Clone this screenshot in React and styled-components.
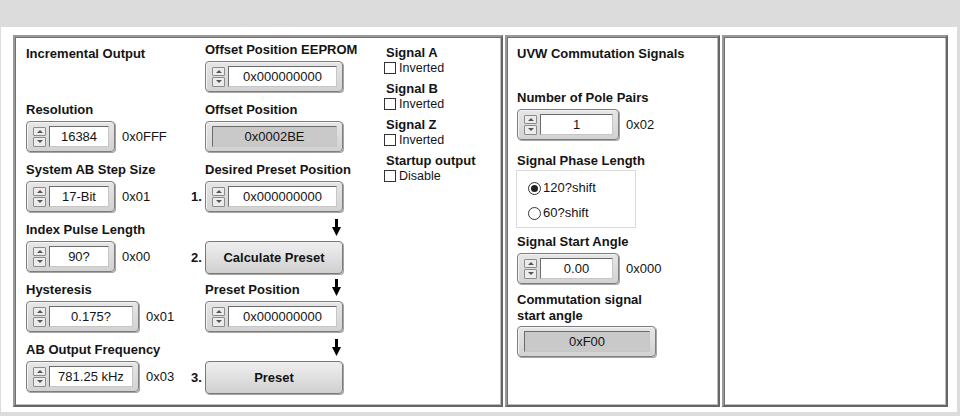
import React from 'react'
import styled, { createGlobalStyle } from 'styled-components'

const GlobalStyle = createGlobalStyle`
  body {
    margin: 0;
    background: #dcdcdc;
    font-family: "Liberation Sans", Arial, sans-serif;
    color: #141414;
  }
`

const Page = styled.div`
  padding: 27px 0 0 1px;
`

const Sheet = styled.div`
  width: 956px;
  height: 385px;
  box-sizing: border-box;
  background: #fff;
  padding: 8px 0 5px 12px;
  display: flex;
  gap: 2px;
`

const Panel = styled.section`
  width: ${(p) => p.$w}px;
  box-sizing: border-box;
  border: 2px solid;
  border-color: #9a9a9a #666 #666 #9a9a9a;
  box-shadow: inset 1px 1px 0 #707070, inset -1px -1px 0 #bdbdbd;
  padding: ${(p) => p.$pad || '5px 0 0 11px'};
`

const MainGrid = styled.div`
  display: grid;
  grid-template-columns: 165px 193px 1fr;
`

const Column = styled.div`
  display: flex;
  flex-direction: column;
  padding-top: ${(p) => p.$pt || 0}px;
`

const Group = styled.div`
  height: 60px;
  display: flex;
  flex-direction: column;
`

const Title = styled.div`
  font-size: 13px;
  font-weight: bold;
  line-height: 16px;
  margin-top: ${(p) => p.$mt || 0}px;
`

const Label = styled.div`
  font-size: 13px;
  font-weight: bold;
  line-height: 16px;
  height: 16px;
  white-space: nowrap;
  margin-top: ${(p) => p.$mt || 0}px;
  margin-bottom: ${(p) => (p.$mb === undefined ? 3 : p.$mb)}px;
`

const LabelLine = styled.div`
  display: flex;
  justify-content: space-between;
  width: 152px;
  height: 16px;
  margin-bottom: 3px;
  padding-left: 14px;
  box-sizing: border-box;
  font-size: 13px;
  font-weight: bold;
  line-height: 16px;
  white-space: nowrap;
`

const Arrow = styled.svg`
  width: 9px;
  height: 17px;
  margin-top: -3px;
  margin-right: 2px;
`

const Row = styled.div`
  display: flex;
  align-items: center;
  gap: 7px;
  margin-top: ${(p) => p.$mt || 0}px;
`

const Marker = styled.span`
  width: 14px;
  font-size: 13px;
  font-weight: bold;
  margin-right: -7px;
`

const Hex = styled.span`
  font-size: 13px;
`

const Frame = styled.div`
  width: ${(p) => p.$w}px;
  height: 31px;
  box-sizing: border-box;
  display: flex;
  align-items: center;
  gap: 3px;
  padding: 0 5px 0 6px;
  border: 1px solid #7e7e7e;
  border-radius: 4px;
  background: linear-gradient(#e6e6e6, #d2d2d2);
  box-shadow: 1px 1px 0 #a6a6a6, inset 1px 1px 0 #f4f4f4;
`

const Spinner = styled.div`
  width: 13px;
  height: 20px;
  display: flex;
  flex-direction: column;
  gap: 1px;
  flex-shrink: 0;
`

const SpinButton = styled.div`
  flex: 1;
  border: 1px solid #8c8c8c;
  border-radius: 1px;
  background: #ececec;
  display: flex;
  align-items: center;
  justify-content: center;
  &::after {
    content: '';
    border-left: 3px solid transparent;
    border-right: 3px solid transparent;
    ${(p) => (p.$down ? 'border-top: 3px solid #555;' : 'border-bottom: 3px solid #555;')}
  }
`

const Field = styled.div`
  flex: 1;
  height: 21px;
  box-sizing: border-box;
  background: ${(p) => (p.$readonly ? '#c9c9c9' : '#fff')};
  border: 1px solid;
  border-color: #6c6c6c #c6c6c6 #c6c6c6 #6c6c6c;
  font-size: 13px;
  line-height: 19px;
  text-align: center;
`

const Button = styled.button`
  width: 138px;
  height: 33px;
  border: 1px solid #7a7a7a;
  border-radius: 4px;
  background: linear-gradient(#eeeeee, #e2e2e2 45%, #cfcfcf);
  box-shadow: 1px 1px 0 #a6a6a6;
  font-family: inherit;
  font-size: 13px;
  font-weight: bold;
  color: #141414;
  padding: 0;
`

const SignalGroup = styled.div`
  display: flex;
  flex-direction: column;
  height: 36px;
`

const SignalTitle = styled.div`
  font-size: 13px;
  font-weight: bold;
  line-height: 17px;
  padding-left: 2px;
`

const CheckRow = styled.label`
  display: flex;
  align-items: flex-start;
  gap: 3px;
  font-size: 12.5px;
  line-height: 15px;
`

const CheckBox = styled.span`
  width: 12px;
  height: 12px;
  box-sizing: border-box;
  border: 1px solid #333;
  background: #fff;
  margin-top: 1px;
`

const RadioBox = styled.div`
  width: 120px;
  height: 58px;
  box-sizing: border-box;
  border: 1px solid #dadada;
  margin-left: -1px;
  padding: 10px 0 0 11px;
  display: flex;
  flex-direction: column;
  gap: 11px;
`

const RadioRow = styled.div`
  display: flex;
  align-items: center;
  gap: 2px;
  font-size: 13px;
  line-height: 14px;
`

const RadioDot = styled.span`
  width: 13px;
  height: 13px;
  box-sizing: border-box;
  border-radius: 50%;
  border: 1px solid #333;
  background: #fff;
  display: flex;
  align-items: center;
  justify-content: center;
  &::after {
    content: '';
    width: 7px;
    height: 7px;
    border-radius: 50%;
    background: ${(p) => (p.$on ? '#222' : 'transparent')};
  }
`

const Numeric = ({ w, value }) => (
  <Frame $w={w}>
    <Spinner>
      <SpinButton />
      <SpinButton $down />
    </Spinner>
    <Field>{value}</Field>
  </Frame>
)

const Indicator = ({ w, value }) => (
  <Frame $w={w}>
    <Field $readonly>{value}</Field>
  </Frame>
)

const DownArrow = () => (
  <Arrow viewBox="0 0 9 17">
    <rect x="3" y="0" width="3" height="9" fill="#000" />
    <polygon points="0,8 9,8 4.5,17" fill="#000" />
  </Arrow>
)

const incremental = [
  { label: 'Resolution', value: '16384', hex: '0x0FFF', w: 89 },
  { label: 'System AB Step Size', value: '17-Bit', hex: '0x01', w: 89 },
  { label: 'Index Pulse Length', value: '90?', hex: '0x00', w: 89 },
  { label: 'Hysteresis', value: '0.175?', hex: '0x01', w: 113 },
  { label: 'AB Output Frequency', value: '781.25 kHz', hex: '0x03', w: 113 },
]

const signals = [
  { title: 'Signal A', text: 'Inverted' },
  { title: 'Signal B', text: 'Inverted' },
  { title: 'Signal Z', text: 'Inverted' },
  { title: 'Startup output', text: 'Disable' },
]

export default function App() {
  return (
    <Page>
      <GlobalStyle />
      <Sheet>
        <Panel $w={490}>
          <MainGrid>
            <Column>
              <Group>
                <Title $mt={4}>Incremental Output</Title>
              </Group>
              {incremental.map((item) => (
                <Group key={item.label}>
                  <Label>{item.label}</Label>
                  <Row>
                    <Numeric w={item.w} value={item.value} />
                    <Hex>{item.hex}</Hex>
                  </Row>
                </Group>
              ))}
            </Column>

            <Column>
              <Group>
                <LabelLine>Offset Position EEPROM</LabelLine>
                <Row>
                  <Marker />
                  <Numeric w={138} value="0x000000000" />
                </Row>
              </Group>
              <Group>
                <LabelLine>Offset Position</LabelLine>
                <Row>
                  <Marker />
                  <Indicator w={138} value="0x0002BE" />
                </Row>
              </Group>
              <Group>
                <LabelLine>Desired Preset Position</LabelLine>
                <Row>
                  <Marker>1.</Marker>
                  <Numeric w={138} value="0x000000000" />
                </Row>
              </Group>
              <Group>
                <LabelLine>
                  <span />
                  <DownArrow />
                </LabelLine>
                <Row>
                  <Marker>2.</Marker>
                  <Button>Calculate Preset</Button>
                </Row>
              </Group>
              <Group>
                <LabelLine>
                  <span>Preset Position</span>
                  <DownArrow />
                </LabelLine>
                <Row>
                  <Marker />
                  <Numeric w={138} value="0x000000000" />
                </Row>
              </Group>
              <Group>
                <LabelLine>
                  <span />
                  <DownArrow />
                </LabelLine>
                <Row>
                  <Marker>3.</Marker>
                  <Button>Preset</Button>
                </Row>
              </Group>
            </Column>

            <Column $pt={2}>
              {signals.map((s) => (
                <SignalGroup key={s.title}>
                  <SignalTitle>{s.title}</SignalTitle>
                  <CheckRow>
                    <CheckBox />
                    {s.text}
                  </CheckRow>
                </SignalGroup>
              ))}
            </Column>
          </MainGrid>
        </Panel>

        <Panel $w={215} $pad="5px 0 0 10px">
          <Column>
            <Title $mt={4}>UVW Commutation Signals</Title>
            <Label $mt={28}>Number of Pole Pairs</Label>
            <Row>
              <Numeric w={102} value="1" />
              <Hex>0x02</Hex>
            </Row>
            <Label $mt={13} $mb={1}>Signal Phase Length</Label>
            <RadioBox>
              <RadioRow>
                <RadioDot $on />
                120?shift
              </RadioRow>
              <RadioRow>
                <RadioDot />
                60?shift
              </RadioRow>
            </RadioBox>
            <Label $mt={6}>Signal Start Angle</Label>
            <Row>
              <Numeric w={102} value="0.00" />
              <Hex>0x000</Hex>
            </Row>
            <Title $mt={8}>
              Commutation signal
              <br />
              start angle
            </Title>
            <Row $mt={2}>
              <Indicator w={139} value="0xF00" />
            </Row>
          </Column>
        </Panel>

        <Panel $w={226} />
      </Sheet>
    </Page>
  )
}
